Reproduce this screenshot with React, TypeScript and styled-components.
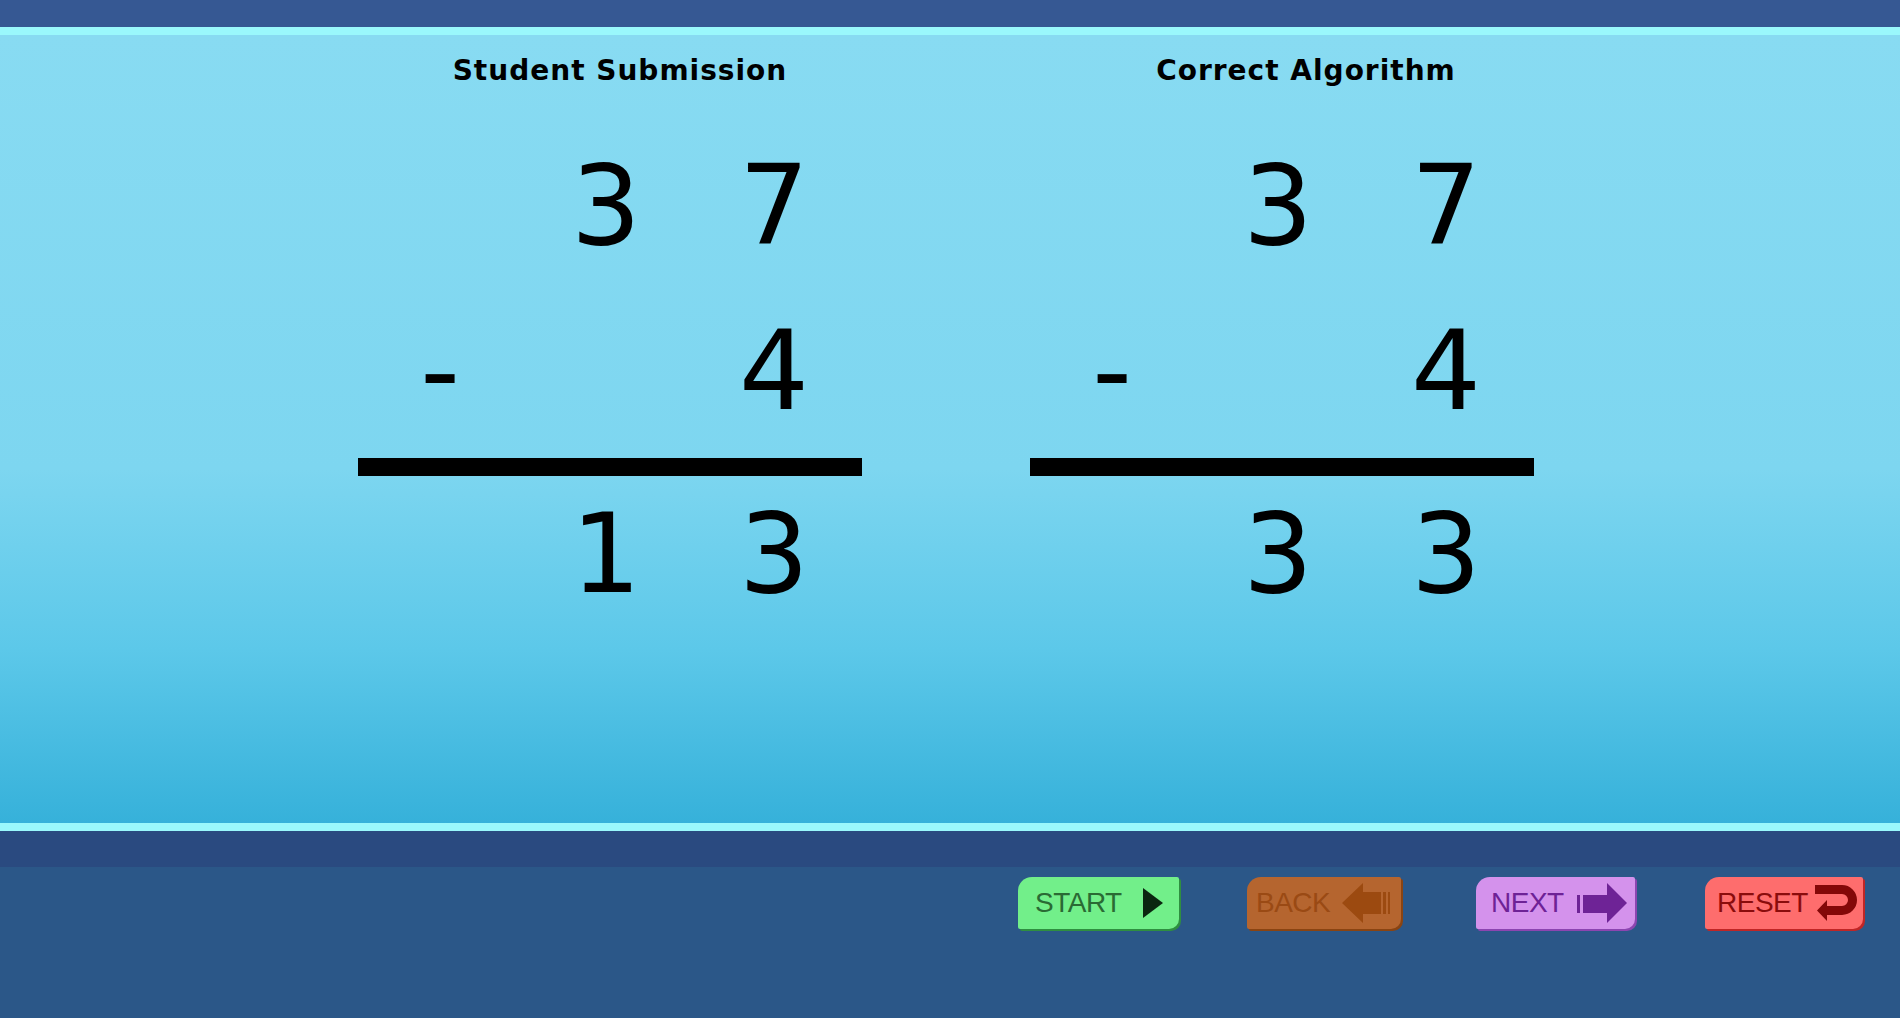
import React from "react";
import styled, { createGlobalStyle } from "styled-components";

const Global = createGlobalStyle`
  html, body { margin: 0; padding: 0; background: #2b5788; }
  body { font-family: "DejaVu Sans", Verdana, sans-serif; }
  #root { min-height: 100vh; }
`;

const Page = styled.div`
  display: flex;
  flex-direction: column;
  height: 1018px;
  overflow: hidden;
`;

const TopBar = styled.div`
  height: 27px;
  background: #365893;
`;

const CyanRule = styled.div`
  height: 8px;
  background: #9af8fc;
`;

const Main = styled.main`
  height: 788px;
  background: linear-gradient(180deg, #88dbf2 0%, #7dd6f0 55%, #5cc8e9 78%, #36b1da 100%);
`;

const Panels = styled.div`
  display: flex;
  gap: 168px;
  padding: 19px 0 0 358px;
`;

const Panel = styled.section`
  width: 504px;
  display: flex;
  flex-direction: column;
`;

const Heading = styled.h2<{ $shift: number }>`
  margin: 0;
  padding-left: ${(p) => p.$shift}px;
  font-family: "DejaVu Sans", Verdana, sans-serif;
  font-weight: bold;
  font-size: 28px;
  line-height: 34px;
  letter-spacing: 1px;
  text-align: center;
  color: #000;
`;

const Row = styled.div<{ $mt: number }>`
  display: grid;
  grid-template-columns: 164px 168px 168px;
  margin-top: ${(p) => p.$mt}px;
  font-family: "DejaVu Sans", Verdana, sans-serif;
  font-size: 110px;
  line-height: 110px;
  height: 110px;
  color: #000;
`;

const Cell = styled.span`
  text-align: center;
`;

const Bar = styled.div`
  margin-top: 32px;
  height: 18px;
  background: #000;
`;

const Band = styled.div`
  height: 36px;
  background: #2a4a80;
`;

const Footer = styled.footer`
  flex: 1;
  background: #2b5788;
  display: grid;
  grid-template-columns: repeat(4, 229px);
  align-items: start;
  padding: 10px 0 0 1018px;
`;

const Button = styled.button<{
  $bg: string;
  $edge: string;
  $fg: string;
  $w: number;
  $pad: string;
}>`
  width: ${(p) => p.$w}px;
  height: 52px;
  border: none;
  margin: 0;
  padding: ${(p) => p.$pad};
  display: flex;
  align-items: center;
  justify-content: space-between;
  background: ${(p) => p.$bg};
  color: ${(p) => p.$fg};
  border-radius: 14px 2px 10px 2px;
  box-shadow: 2px 2px 0 ${(p) => p.$edge};
  font-family: "Liberation Sans", Arial, sans-serif;
  font-size: 28px;
  letter-spacing: -0.5px;
  line-height: 1;
  cursor: pointer;
`;

const Label = styled.span`
  display: block;
`;

const Icon = styled.svg`
  display: block;
  flex: none;
`;

type Problem = {
  title: string;
  shift: number;
  top: [string, string];
  sub: string;
  result: [string, string];
};

const problems: Problem[] = [
  { title: "Student Submission", shift: 20, top: ["3", "7"], sub: "4", result: ["1", "3"] },
  { title: "Correct Algorithm", shift: 48, top: ["3", "7"], sub: "4", result: ["3", "3"] },
];

const PlayIcon = () => (
  <Icon width="20" height="30" viewBox="0 0 20 30">
    <polygon points="0,0 20,15 0,30" fill="#0b2610" />
  </Icon>
);

const BackIcon = () => (
  <Icon width="51" height="40" viewBox="0 0 51 40">
    <path d="M0 20 L21 0 V9 H39 V31 H21 V40 Z" fill="#9c4a10" />
    <rect x="41" y="9" width="3" height="22" fill="#9c4a10" />
    <rect x="46" y="9" width="2" height="22" fill="#9c4a10" />
  </Icon>
);

const NextIcon = () => (
  <Icon width="50" height="40" viewBox="0 0 50 40">
    <rect x="0" y="12" width="3" height="18" fill="#6e2396" />
    <path d="M6 12 H30 V0 L50 20 L30 40 V30 H6 Z" fill="#6e2396" />
  </Icon>
);

const ResetIcon = () => (
  <Icon width="42" height="37" viewBox="0 0 42 37">
    <path
      d="M0 0 H27 A15 15 0 0 1 27 30 H12 V36 L2 25.5 L12 15 V21 H27 A6 6 0 0 0 27 9 H0 Z"
      fill="#840808"
    />
  </Icon>
);

export default function App() {
  return (
    <Page>
      <Global />
      <TopBar />
      <CyanRule />
      <Main>
        <Panels>
          {problems.map((p) => (
            <Panel key={p.title}>
              <Heading $shift={p.shift}>{p.title}</Heading>
              <Row $mt={63}>
                <Cell />
                <Cell>{p.top[0]}</Cell>
                <Cell>{p.top[1]}</Cell>
              </Row>
              <Row $mt={55}>
                <Cell>-</Cell>
                <Cell />
                <Cell>{p.sub}</Cell>
              </Row>
              <Bar />
              <Row $mt={23}>
                <Cell />
                <Cell>{p.result[0]}</Cell>
                <Cell>{p.result[1]}</Cell>
              </Row>
            </Panel>
          ))}
        </Panels>
      </Main>
      <CyanRule />
      <Band />
      <Footer>
        <Button $bg="#72ef8a" $edge="#2f8f40" $fg="#2a6a34" $w={161} $pad="0 16px 0 17px">
          <Label>START</Label>
          <PlayIcon />
        </Button>
        <Button $bg="#b5652f" $edge="#8a4412" $fg="#9a4a14" $w={154} $pad="0 8px 0 9px">
          <Label>BACK</Label>
          <BackIcon />
        </Button>
        <Button $bg="#d492ec" $edge="#8c45b0" $fg="#6e2296" $w={159} $pad="0 8px 0 15px">
          <Label>NEXT</Label>
          <NextIcon />
        </Button>
        <Button $bg="#fe6d6d" $edge="#c02626" $fg="#8a0c0c" $w={158} $pad="0 6px 0 12px">
          <Label>RESET</Label>
          <ResetIcon />
        </Button>
      </Footer>
    </Page>
  );
}
